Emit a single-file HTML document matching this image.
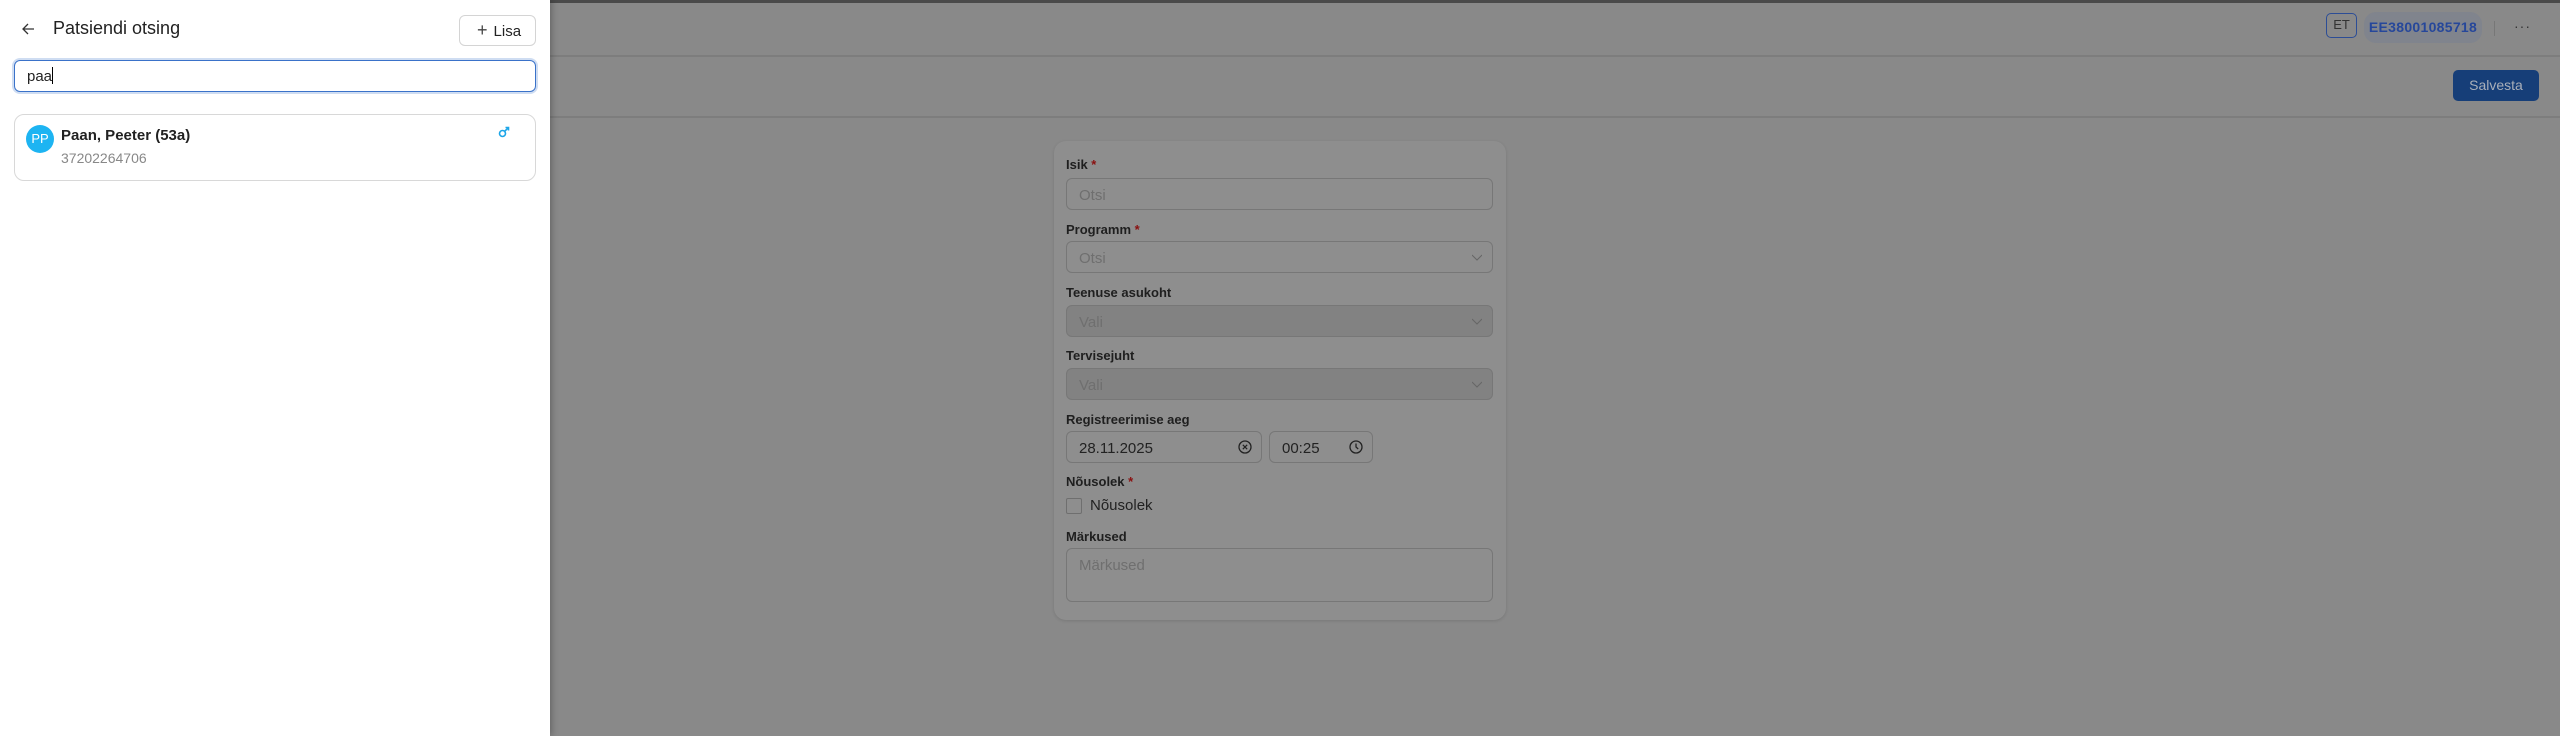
<!DOCTYPE html>
<html><head><meta charset="utf-8"><style>
*{box-sizing:border-box;margin:0;padding:0}
body{width:2560px;height:736px;overflow:hidden;background:#898989;font-family:"Liberation Sans",sans-serif;position:relative}
.a{position:absolute}
.topbar{left:0;top:0;width:2560px;height:3px;background:#4a4a4a}
.line{left:550px;width:2010px;height:2px;background:#7d7d7d}
.panel{left:0;top:0;width:550px;height:736px;background:#fff;box-shadow:2px 0 6px rgba(0,0,0,.25)}
.lbl{font-size:13px;font-weight:bold;color:#1f1f1f;left:1066px}
.lbl .r{color:#8a1010}
.inp{left:1066px;width:427px;height:32px;border:1px solid #777;border-radius:6px;font-size:15px;color:#6f6f6f;padding:8px 12px}
.dis{background:#828282}
.chev{position:absolute;right:10px;top:10px;width:10px;height:10px}
</style></head><body>
<div class="a topbar"></div>
<div class="a line" style="top:55px"></div>
<div class="a line" style="top:116px"></div>
<div class="a" style="left:2326px;top:13px;width:31px;height:25px;border:1.5px solid #2c4d96;border-radius:5px;font-size:13px;color:#333;text-align:center;line-height:22px">ET</div>
<div class="a" style="left:2364px;top:12px;width:118px;height:31px;background:#80848d;border-radius:12px;font-size:14px;font-weight:bold;color:#26479a;text-align:center;line-height:31px;letter-spacing:.3px">EE38001085718</div>
<div class="a" style="left:2494px;top:21px;width:1px;height:15px;background:#777"></div>
<div class="a" style="left:2514px;top:18px;font-size:14px;color:#333;letter-spacing:1px">···</div>
<div class="a" style="left:2453px;top:70px;width:86px;height:31px;background:#163e78;border-radius:5px;color:#a9afb9;font-size:14px;text-align:center;line-height:31px">Salvesta</div>

<div class="a" style="left:1054px;top:141px;width:452px;height:479px;background:#8e8e8e;border-radius:12px;box-shadow:0 1px 3px rgba(0,0,0,.12)"></div>
<div class="a lbl" style="top:157px">Isik <span class="r">*</span></div>
<div class="a inp" style="top:178px">Otsi</div>
<div class="a lbl" style="top:222px">Programm <span class="r">*</span></div>
<div class="a inp" style="top:241px">Otsi<svg class="chev" viewBox="0 0 10 10"><path d="M0 3l5 5 5-5" fill="none" stroke="#666" stroke-width="1"/></svg></div>
<div class="a lbl" style="top:285px">Teenuse asukoht</div>
<div class="a inp dis" style="top:305px">Vali<svg class="chev" viewBox="0 0 10 10"><path d="M0 3l5 5 5-5" fill="none" stroke="#666" stroke-width="1"/></svg></div>
<div class="a lbl" style="top:348px">Tervisejuht</div>
<div class="a inp dis" style="top:368px">Vali<svg class="chev" viewBox="0 0 10 10"><path d="M0 3l5 5 5-5" fill="none" stroke="#666" stroke-width="1"/></svg></div>
<div class="a lbl" style="top:412px">Registreerimise aeg</div>
<div class="a inp" style="top:431px;width:196px;color:#222">28.11.2025<svg class="a" style="right:9px;top:8px" width="14" height="14" viewBox="0 0 14 14"><circle cx="7" cy="7" r="6" fill="none" stroke="#222" stroke-width="1.3"/><path d="M4.8 4.8l4.4 4.4M9.2 4.8l-4.4 4.4" stroke="#222" stroke-width="1.2"/></svg></div>
<div class="a inp" style="top:431px;left:1269px;width:104px;color:#222">00:25<svg class="a" style="right:9px;top:8px" width="14" height="14" viewBox="0 0 14 14"><circle cx="7" cy="7" r="6" fill="none" stroke="#222" stroke-width="1.3"/><path d="M7 3.5V7l2.2 2" fill="none" stroke="#222" stroke-width="1.3"/></svg></div>
<div class="a lbl" style="top:474px">Nõusolek <span class="r">*</span></div>
<div class="a" style="left:1066px;top:498px;width:16px;height:16px;border:1px solid #6f6f6f;border-radius:2px"></div>
<div class="a" style="left:1090px;top:497px;font-size:15px;color:#222">Nõusolek</div>
<div class="a lbl" style="top:529px">Märkused</div>
<div class="a inp" style="top:548px;height:54px">Märkused</div>

<div class="a panel"></div>
<svg class="a" style="left:21px;top:22px" width="14" height="14" viewBox="0 0 14 14"><path d="M13 7H2M7 2L2 7l5 5" fill="none" stroke="#333" stroke-width="1.3"/></svg>
<div class="a" style="left:53px;top:18px;font-size:18px;color:#222">Patsiendi otsing</div>
<div class="a" style="left:459px;top:15px;width:77px;height:31px;border:1px solid #d4d4d4;border-radius:6px;font-size:15px;color:#222;line-height:29px;padding-left:17px"><span style="font-size:18px;color:#444;margin-right:6px">+</span>Lisa</div>
<div class="a" style="left:14px;top:60px;width:522px;height:32px;border:1.5px solid #3a72c9;border-radius:6px;box-shadow:0 0 0 2px #cfddf2;font-size:15px;color:#222;padding:6px 12px">paa<span style="display:inline-block;width:1px;height:17px;background:#000;vertical-align:-3px"></span></div>
<div class="a" style="left:14px;top:114px;width:522px;height:67px;border:1px solid #d8d8d8;border-radius:10px"></div>
<div class="a" style="left:26px;top:125px;width:28px;height:28px;border-radius:50%;background:#1db4f2;color:#fff;font-size:13px;text-align:center;line-height:28px">PP</div>
<div class="a" style="left:61px;top:127px;font-size:15px;font-weight:bold;color:#222">Paan, Peeter (53a)</div>
<div class="a" style="left:61px;top:150px;font-size:14px;color:#888">37202264706</div>
<svg class="a" style="left:498px;top:126px" width="12" height="12" viewBox="0 0 12 12"><circle cx="4.5" cy="7.5" r="3" fill="none" stroke="#1da6e8" stroke-width="1.6"/><path d="M6.8 5.2L10.5 1.5M7.5 1.5h3v3" fill="none" stroke="#1da6e8" stroke-width="1.6"/></svg>
</body></html>
